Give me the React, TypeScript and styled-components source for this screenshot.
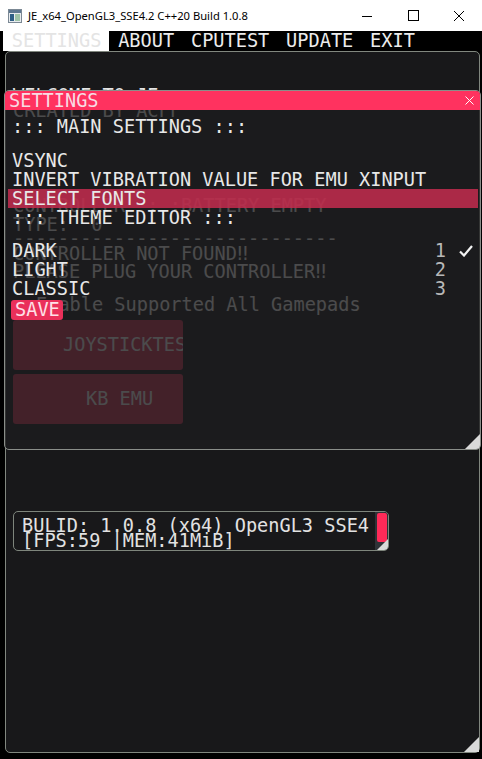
import React from 'react';
import styled, { createGlobalStyle } from 'styled-components';

const MONO = `'DejaVu Sans Mono', 'Liberation Mono', monospace`;

const GlobalStyle = createGlobalStyle`
  html, body {
    margin: 0;
    padding: 0;
    background: #000;
  }
  body {
    width: 482px;
    height: 759px;
    overflow: hidden;
  }
`;

const Frame = styled.div`
  position: relative;
  width: 482px;
  height: 759px;
  background: #000;
  font-family: ${MONO};
  font-size: 18.6px;
  overflow: hidden;
`;

/* windows caption */
const Caption = styled.div`
  display: flex;
  align-items: center;
  height: 31px;
  background: #fff;
  color: #000;
  font-family: 'Noto Sans', 'Liberation Sans', sans-serif;
  font-size: 11.2px;
`;

const AppIcon = styled.svg`
  width: 14px;
  height: 14px;
  margin: 0 6px 0 8px;
`;

const CaptionTitle = styled.span`
  flex: 1;
  white-space: nowrap;
`;

const CaptionButton = styled.div`
  display: flex;
  align-items: center;
  justify-content: center;
  width: 46px;
  height: 31px;
`;

/* imgui menubar */
const MenuBar = styled.div`
  display: flex;
  height: 20px;
  padding-left: 3px;
  background: #000;
`;

const MenuItem = styled.div<{ $active?: boolean }>`
  height: 20px;
  line-height: 20px;
  padding: 0 8px 0 8.8px;
  background: ${({ $active }) => ($active ? '#fff' : 'transparent')};
  color: ${({ $active }) => ($active ? '#e4e4e4' : '#ececec')};
  white-space: nowrap;
`;

const Desktop = styled.div`
  height: 708px;
  padding-left: 5px;
  box-sizing: border-box;
`;

const MainWindow = styled.div`
  position: relative;
  width: 475px;
  height: 702px;
  box-sizing: border-box;
  border: 1px solid #81877f;
  border-radius: 5px;
  background: #18181a;
  padding: 34px 7px 0;
  color: #e4e4e4;
`;

const Line = styled.div<{ $gap?: number; $indent?: number }>`
  height: 19px;
  line-height: 19px;
  white-space: pre;
  margin-top: ${({ $gap }) => $gap ?? 0}px;
  padding-left: ${({ $indent }) => $indent ?? 0}px;
`;

const BigButton = styled.div<{ $gap?: number; $pad: number }>`
  width: 170px;
  height: 50px;
  line-height: 50px;
  margin-top: ${({ $gap }) => $gap ?? 0}px;
  padding-left: ${({ $pad }) => $pad}px;
  box-sizing: border-box;
  border-radius: 3px;
  background: #c32f51;
  color: #e4e4e4;
  white-space: nowrap;
  overflow: hidden;
`;

const BuildBox = styled.div`
  position: relative;
  display: flex;
  width: 376px;
  height: 40px;
  margin-top: 87px;
  box-sizing: border-box;
  border: 1px solid #7e857c;
  border-radius: 5px;
  overflow: hidden;
`;

const BuildText = styled.div`
  flex: 1;
  padding: 6px 0 0 8px;
  line-height: 15px;
  white-space: pre;
  overflow: hidden;
  color: #e2e2e2;
`;

const ScrollTrack = styled.div`
  width: 13px;
  background: #2f3237;
  padding: 1px 1px 0 2px;
  box-sizing: border-box;
`;

const ScrollThumb = styled.div`
  height: 29px;
  border-radius: 2px;
  background: #ff2a58;
`;

const Grip = styled.div<{ $size: number }>`
  position: absolute;
  right: 0;
  bottom: 0;
  width: ${({ $size }) => $size}px;
  height: ${({ $size }) => $size}px;
  background: #d9d9d9;
  clip-path: polygon(100% 0, 100% 100%, 0 100%);
`;

/* floating settings window */
const SettingsWindow = styled.div`
  position: absolute;
  left: 4px;
  top: 90px;
  width: 477px;
  height: 360px;
  box-sizing: border-box;
  border: 1px solid #8a8e89;
  border-radius: 5px;
  background: rgba(28, 28, 30, 0.77);
  color: #e8e8e8;
  overflow: hidden;
`;

const SettingsTitle = styled.div`
  display: flex;
  align-items: center;
  height: 19px;
  line-height: 19px;
  padding-left: 4px;
  background: #ff325f;
  color: #f8dce3;
`;

const TitleText = styled.span`
  flex: 1;
`;

const CloseIcon = styled.svg`
  width: 9px;
  height: 9px;
  margin-right: 6px;
`;

const SettingsBody = styled.div`
  padding: 7px 2px 0 3px;
`;

const Row = styled.div<{ $gap?: number; $selected?: boolean }>`
  display: flex;
  align-items: center;
  height: 19px;
  line-height: 19px;
  padding-left: 4px;
  margin-top: ${({ $gap }) => $gap ?? 0}px;
  white-space: pre;
  background: ${({ $selected }) => ($selected ? 'rgba(196, 44, 78, 0.86)' : 'transparent')};
`;

const RowLabel = styled.span`
  flex: 1;
`;

const Shortcut = styled.span`
  color: #b8b8b8;
`;

const CheckSlot = styled.span`
  display: flex;
  align-items: center;
  width: 19px;
  height: 19px;
  margin-left: 13px;
`;

const SaveButton = styled.div`
  display: inline-block;
  height: 20px;
  line-height: 20px;
  margin: 2px 0 0 3px;
  padding: 0 3px 0 4px;
  border-radius: 3px;
  background: #ea305a;
  color: #ffe0e7;
`;

const themes = [
  { name: 'DARK', key: '1', checked: true },
  { name: 'LIGHT', key: '2', checked: false },
  { name: 'CLASSIC', key: '3', checked: false },
];

const App = () => {
  return (
    <Frame>
      <GlobalStyle />
      <Caption>
        <AppIcon viewBox="0 0 14 14">
          <rect x="0.5" y="0.5" width="13" height="13" fill="#e8ecef" stroke="#7b8894" />
          <rect x="1" y="1" width="12" height="3" fill="#5e7891" />
          <rect x="2" y="5" width="4" height="7" fill="#2f5f86" />
          <rect x="7" y="5" width="5" height="7" fill="#9fc3a8" />
        </AppIcon>
        <CaptionTitle>JE_x64_OpenGL3_SSE4.2 C++20 Build 1.0.8</CaptionTitle>
        <CaptionButton>
          <svg width="10" height="10" viewBox="0 0 10 10">
            <line x1="0" y1="5.5" x2="10" y2="5.5" stroke="#000" strokeWidth="1" />
          </svg>
        </CaptionButton>
        <CaptionButton>
          <svg width="11" height="11" viewBox="0 0 11 11">
            <rect x="0.5" y="0.5" width="10" height="10" fill="none" stroke="#000" strokeWidth="1" />
          </svg>
        </CaptionButton>
        <CaptionButton>
          <svg width="10" height="10" viewBox="0 0 10 10">
            <path d="M0 0 L10 10 M10 0 L0 10" stroke="#000" strokeWidth="1" />
          </svg>
        </CaptionButton>
      </Caption>

      <MenuBar>
        <MenuItem $active>SETTINGS</MenuItem>
        <MenuItem>ABOUT</MenuItem>
        <MenuItem>CPUTEST</MenuItem>
        <MenuItem>UPDATE</MenuItem>
        <MenuItem>EXIT</MenuItem>
      </MenuBar>

      <Desktop>
        <MainWindow>
          <Line>WELCOME TO JE</Line>
          <Line $gap={-4}>CREATED BY ACFF</Line>
          <Line $gap={76}>CONTROLLER  : :BATTERY EMPTY</Line>
          <Line>TYPE:  0</Line>
          <Line $gap={-5}>-----------------------------</Line>
          <Line $gap={-4}>CONTROLLER NOT FOUND‼</Line>
          <Line $gap={-1}>PLEASE PLUG YOUR CONTROLLER‼</Line>
          <Line $gap={14} $indent={23}>Enable Supported All Gamepads</Line>
          <BigButton $gap={6} $pad={50}>JOYSTICKTEST</BigButton>
          <BigButton $gap={4} $pad={73}>KB EMU</BigButton>
          <BuildBox>
            <BuildText>
              {'BULID: 1.0.8 (x64) OpenGL3 SSE4\n[FPS:59 |MEM:41MiB]'}
            </BuildText>
            <ScrollTrack>
              <ScrollThumb />
            </ScrollTrack>
            <Grip $size={11} />
          </BuildBox>
          <Grip $size={15} />
        </MainWindow>
      </Desktop>

      <SettingsWindow>
        <SettingsTitle>
          <TitleText>SETTINGS</TitleText>
          <CloseIcon viewBox="0 0 9 9">
            <path d="M0.5 0.5 L8.5 8.5 M8.5 0.5 L0.5 8.5" stroke="#fff" strokeWidth="1" />
          </CloseIcon>
        </SettingsTitle>
        <SettingsBody>
          <Row>::: MAIN SETTINGS :::</Row>
          <Row $gap={15}>VSYNC</Row>
          <Row>INVERT VIBRATION VALUE FOR EMU XINPUT</Row>
          <Row $selected>SELECT FONTS</Row>
          <Row>::: THEME EDITOR :::</Row>
          {themes.map((t, i) => (
            <Row key={t.name} $gap={i === 0 ? 14 : 0}>
              <RowLabel>{t.name}</RowLabel>
              <Shortcut>{t.key}</Shortcut>
              <CheckSlot>
                {t.checked && (
                  <svg width="14" height="12" viewBox="0 0 14 12">
                    <path d="M1 6.5 L5 10.5 L13 1" fill="none" stroke="#f2f2f2" strokeWidth="2.2" />
                  </svg>
                )}
              </CheckSlot>
            </Row>
          ))}
          <SaveButton>SAVE</SaveButton>
        </SettingsBody>
        <Grip $size={15} />
      </SettingsWindow>
    </Frame>
  );
};

export default App;
